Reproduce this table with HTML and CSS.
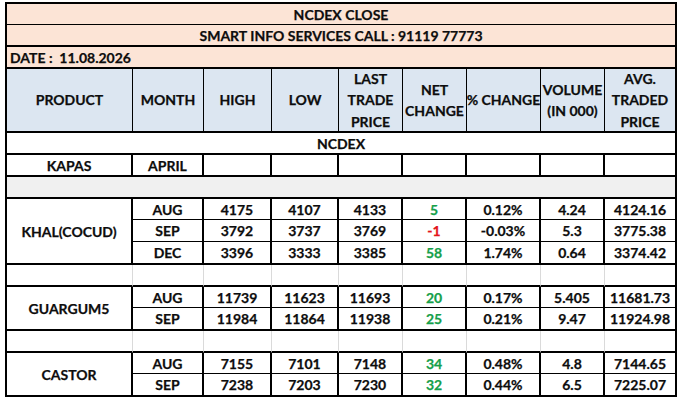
FILE: index.html
```html
<!DOCTYPE html>
<html>
<head>
<meta charset="utf-8">
<title>NCDEX CLOSE</title>
<link rel="stylesheet" href="styles.css">
</head>
<body>
<div class="sheet">
  <div class="c full peach thin-b">NCDEX CLOSE</div>
  <div class="c full peach">SMART INFO SERVICES CALL : 91119 77773</div>
  <div class="c full peach left">DATE :&nbsp; 11.08.2026</div>

  <div class="c hd">PRODUCT</div>
  <div class="c hd">MONTH</div>
  <div class="c hd">HIGH</div>
  <div class="c hd">LOW</div>
  <div class="c hd">LAST<br>TRADE<br>PRICE</div>
  <div class="c hd">NET<br>CHANGE</div>
  <div class="c hd nw">% CHANGE</div>
  <div class="c hd">VOLUME<br>(IN 000)</div>
  <div class="c hd last">AVG.<br>TRADED<br>PRICE</div>

  <div class="c full">NCDEX</div>

  <div class="c">KAPAS</div>
  <div class="c">APRIL</div>
  <div class="c"></div><div class="c"></div><div class="c"></div><div class="c"></div><div class="c"></div><div class="c"></div><div class="c"></div>

  <div class="c full grey"></div>

  <div class="c prod span3">KHAL(COCUD)</div>
  <div class="c thin-b">AUG</div><div class="c thin-b">4175</div><div class="c thin-b">4107</div><div class="c thin-b">4133</div><div class="c thin-b up">5</div><div class="c thin-b">0.12%</div><div class="c thin-b">4.24</div><div class="c thin-b">4124.16</div>
  <div class="c thin-b">SEP</div><div class="c thin-b">3792</div><div class="c thin-b">3737</div><div class="c thin-b">3769</div><div class="c thin-b down">-1</div><div class="c thin-b">-0.03%</div><div class="c thin-b">5.3</div><div class="c thin-b">3775.38</div>
  <div class="c">DEC</div><div class="c">3396</div><div class="c">3333</div><div class="c">3385</div><div class="c up">58</div><div class="c">1.74%</div><div class="c">0.64</div><div class="c">3374.42</div>

  <div class="c blank"></div><div class="c blank"></div><div class="c blank"></div><div class="c blank"></div><div class="c blank"></div><div class="c blank"></div><div class="c blank"></div><div class="c blank"></div><div class="c"></div>

  <div class="c prod span2">GUARGUM5</div>
  <div class="c thin-b">AUG</div><div class="c thin-b">11739</div><div class="c thin-b">11623</div><div class="c thin-b">11693</div><div class="c thin-b up">20</div><div class="c thin-b">0.17%</div><div class="c thin-b">5.405</div><div class="c thin-b">11681.73</div>
  <div class="c">SEP</div><div class="c">11984</div><div class="c">11864</div><div class="c">11938</div><div class="c up">25</div><div class="c">0.21%</div><div class="c">9.47</div><div class="c">11924.98</div>

  <div class="c blank"></div><div class="c blank"></div><div class="c blank"></div><div class="c blank"></div><div class="c blank"></div><div class="c blank"></div><div class="c blank"></div><div class="c blank"></div><div class="c"></div>

  <div class="c prod span2">CASTOR</div>
  <div class="c thin-b">AUG</div><div class="c thin-b">7155</div><div class="c thin-b">7101</div><div class="c thin-b">7148</div><div class="c thin-b up">34</div><div class="c thin-b">0.48%</div><div class="c thin-b">4.8</div><div class="c thin-b">7144.65</div>
  <div class="c">SEP</div><div class="c">7238</div><div class="c">7203</div><div class="c">7230</div><div class="c up">32</div><div class="c">0.44%</div><div class="c">6.5</div><div class="c">7225.07</div>
</div>
</body>
</html>
```

FILE: styles.css
```css
html, body {
  margin: 0;
  padding: 0;
  background: #ffffff;
}

body {
  width: 682px;
  height: 401px;
  overflow: hidden;
  font-family: Lato, "Liberation Sans", sans-serif;
  font-weight: 700;
  font-size: 14px;
  color: #0d0d0d;
  -webkit-text-stroke: 0.25px #0d0d0d;
  padding-top: 2px;
  padding-left: 5px;
  box-sizing: border-box;
}

.sheet {
  display: grid;
  width: max-content;
  grid-template-columns: 126px 71px 68px 67px 64px 64px 74px 64px 72px;
  grid-template-rows: 21px 22px 22px 64px 22px 22px 22px 21px 22px 23px 22px 21px 23px 22px 21px 23px;
  border-left: 2px solid #000;
  border-top: 2px solid #000;
}

.c {
  box-sizing: border-box;
  border-right: 2px solid #000;
  border-bottom: 2px solid #000;
  display: flex;
  align-items: center;
  justify-content: center;
  text-align: center;
  white-space: nowrap;
  line-height: 16px;
  padding-top: 1px;
}

.full {
  grid-column: 1 / -1;
}

.peach {
  background: #fce4d6;
}

.thin-b {
  border-bottom-width: 1px;
}

.left {
  justify-content: flex-start;
  padding-left: 3px;
}

.hd {
  background: #dce6f1;
  border-right-width: 1px;
  line-height: 21.5px;
  padding-top: 0;
}

.hd.last {
  border-right-width: 2px;
}

.grey {
  background: #f0f0f0;
}

.prod.span3 {
  grid-row: span 3;
}

.prod.span2 {
  grid-row: span 2;
}

.blank {
  border-right: 1px solid #dadada;
}

.up {
  color: #15a04a;
  -webkit-text-stroke-color: #15a04a;
}

.down {
  color: #e3131b;
  -webkit-text-stroke-color: #e3131b;
}
```
